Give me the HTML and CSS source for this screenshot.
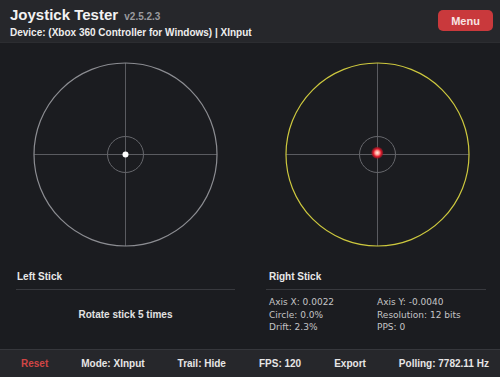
FILE: index.html
```html
<!DOCTYPE html>
<html>
<head>
<meta charset="utf-8">
<link rel="stylesheet" href="styles.css">
</head>
<body>
<div class="app">
  <header class="header">
    <div class="titles">
      <div class="title">Joystick Tester <span class="version">v2.5.2.3</span></div>
      <div class="device">Device: (Xbox 360 Controller for Windows) | XInput</div>
    </div>
    <button class="menu">Menu</button>
  </header>
  <main class="main">
    <div class="sticks">
      <div class="stick">
        <svg width="185" height="185" viewBox="0 0 185 185">
          <line x1="92.5" y1="1" x2="92.5" y2="184" class="axis"/>
          <line x1="1" y1="92.5" x2="184" y2="92.5" class="axis"/>
          <circle cx="92.5" cy="92.5" r="91.5" class="outer"/>
          <circle cx="92.5" cy="92.5" r="18" class="inner"/>
          <circle cx="92.5" cy="92.5" r="3" class="dot"/>
        </svg>
      </div>
      <div class="stick right">
        <svg width="185" height="185" viewBox="0 0 185 185">
          <defs>
            <radialGradient id="glow" cx="50%" cy="50%" r="50%">
              <stop offset="0%" stop-color="#fff0e4"/>
              <stop offset="35%" stop-color="#ff9a90"/>
              <stop offset="65%" stop-color="#e01a2c"/>
              <stop offset="100%" stop-color="#8a1420" stop-opacity="0.6"/>
            </radialGradient>
          </defs>
          <line x1="92.5" y1="1" x2="92.5" y2="184" class="axis"/>
          <line x1="1" y1="92.5" x2="184" y2="92.5" class="axis"/>
          <circle cx="92.5" cy="92.5" r="91.5" class="outer yellow"/>
          <circle cx="92.5" cy="92.5" r="18" class="inner"/>
          <circle cx="92.3" cy="90.8" r="6" fill="url(#glow)"/>
        </svg>
      </div>
    </div>
    <div class="panels">
      <section class="panel">
        <h2 class="panel-title">Left Stick</h2>
        <p class="hint">Rotate stick 5 times</p>
      </section>
      <section class="panel panel-right">
        <h2 class="panel-title">Right Stick</h2>
        <div class="stats">
          <span>Axis X: 0.0022</span><span>Axis Y: -0.0040</span>
          <span>Circle: 0.0%</span><span>Resolution: 12 bits</span>
          <span>Drift: 2.3%</span><span>PPS: 0</span>
        </div>
      </section>
    </div>
  </main>
  <footer class="footer">
    <span class="reset">Reset</span>
    <span>Mode: XInput</span>
    <span>Trail: Hide</span>
    <span>FPS: 120</span>
    <span>Export</span>
    <span>Polling: 7782.11 Hz</span>
  </footer>
</div>
</body>
</html>
```
FILE: styles.css
```css
html, body {
  margin: 0;
  padding: 0;
  background: #1b1c20;
}
.app {
  width: 500px;
  height: 377px;
  display: flex;
  flex-direction: column;
  font-family: "Liberation Sans", Arial, sans-serif;
  color: #ececec;
  overflow: hidden;
}
.header {
  height: 43px;
  box-sizing: border-box;
  background: #26272b;
  border-bottom: 1px solid #2c2d31;
  display: flex;
  justify-content: space-between;
  align-items: flex-start;
  padding: 6px 7px 0 10px;
}
.title {
  font-size: 15px;
  font-weight: bold;
  line-height: 18px;
  color: #f2f2f2;
}
.version {
  font-size: 10px;
  color: #9a9a9e;
  margin-left: 2px;
}
.device {
  margin-top: 1px;
  font-size: 10px;
  font-weight: bold;
  line-height: 12px;
  color: #eeeeee;
}
.menu {
  margin-top: 4px;
  width: 55px;
  height: 21px;
  border: none;
  border-radius: 5px;
  background: #c9393c;
  color: #f7e4e4;
  font-family: "Liberation Sans", Arial, sans-serif;
  font-size: 11px;
  font-weight: bold;
  padding: 0;
}
.main {
  flex: 1;
  display: flex;
  flex-direction: column;
  background: #1b1c20;
}
.sticks {
  display: grid;
  grid-template-columns: 250px 250px;
  padding-top: 19px;
}
.stick {
  display: flex;
  justify-content: center;
}
.stick svg {
  display: block;
}
.stick.right {
  padding-left: 4px;
}
.axis {
  stroke: #5a5b60;
  stroke-width: 1;
}
.outer {
  fill: none;
  stroke: #8c8d92;
  stroke-width: 1.2;
}
.outer.yellow {
  stroke: #cdc83e;
  stroke-width: 1.2;
}
.inner {
  fill: none;
  stroke: #66676c;
  stroke-width: 1;
}
.dot {
  fill: #ffffff;
}
.panels {
  display: grid;
  grid-template-columns: 250px 250px;
  margin-top: 24px;
}
.panel {
  padding: 0 15px 0 16px;
}
.panel-right {
  padding: 0 14px 0 16px;
}
.panel-title {
  margin: 0;
  font-size: 10px;
  font-weight: bold;
  line-height: 12px;
  color: #e8e8e8;
  padding: 0 0 6px 1px;
  border-bottom: 1px solid #38393e;
}
.panel-right .panel-title {
  padding-left: 3px;
}
.hint {
  margin: 19px 0 0;
  text-align: center;
  font-size: 10px;
  font-weight: bold;
  line-height: 12px;
  color: #e2e2e2;
}
.stats {
  margin-top: 6px;
  display: grid;
  grid-template-columns: 108px 1fr;
  padding-left: 3px;
  font-family: "DejaVu Sans", Verdana, sans-serif;
  font-size: 9px;
  line-height: 12.5px;
  color: #c4c4c6;
}
.footer {
  height: 28px;
  box-sizing: border-box;
  background: #26272b;
  border-top: 1px solid #36373c;
  display: flex;
  align-items: center;
  gap: 33px;
  padding-left: 21px;
  font-size: 10px;
  font-weight: bold;
  color: #e6e6e6;
  white-space: nowrap;
}
.reset {
  color: #d04545;
}
```
